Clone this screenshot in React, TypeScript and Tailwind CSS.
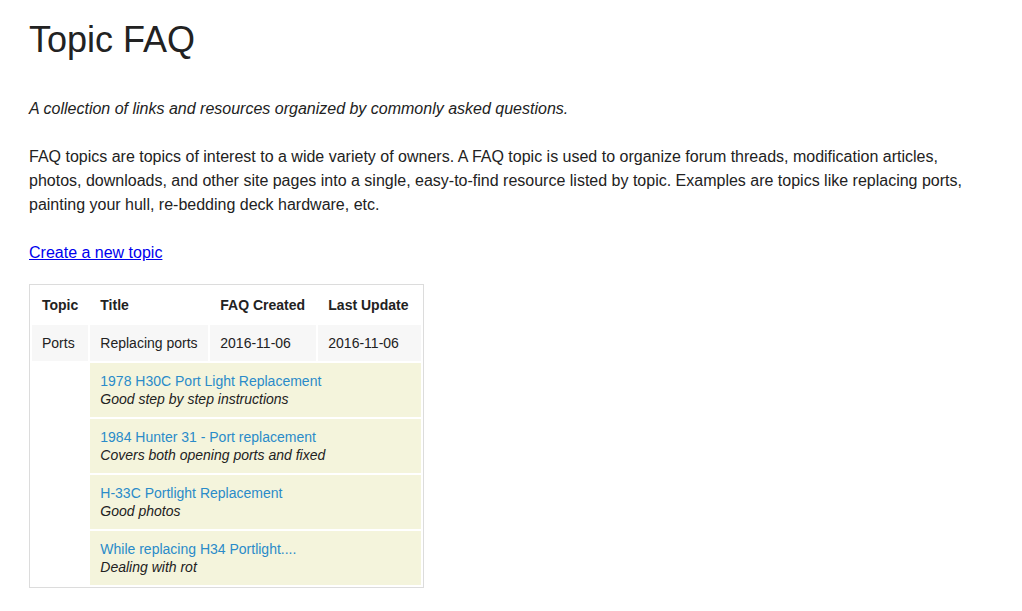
import React from 'react'

interface FaqLink {
  title: string
  note: string
}

interface Topic {
  name: string
  title: string
  created: string
  updated: string
  links: FaqLink[]
}

const topics: Topic[] = [
  {
    name: 'Ports',
    title: 'Replacing ports',
    created: '2016-11-06',
    updated: '2016-11-06',
    links: [
      { title: '1978 H30C Port Light Replacement', note: 'Good step by step instructions' },
      { title: '1984 Hunter 31 - Port replacement', note: 'Covers both opening ports and fixed' },
      { title: 'H-33C Portlight Replacement', note: 'Good photos' },
      { title: 'While replacing H34 Portlight....', note: 'Dealing with rot' },
    ],
  },
]

// column headers with their widths
const headers = [
  { label: 'Topic', width: 'w-[56px]' },
  { label: 'Title', width: 'w-[118px]' },
  { label: 'FAQ Created', width: 'w-[106px]' },
  { label: 'Last Update', width: 'w-[103px]' },
]

export default function App() {
  return (
    <div className="min-h-screen bg-white pl-[29px] pr-[29px] font-['Liberation_Sans',Arial,sans-serif] text-[#222]">
      <h1 className="pt-[20px] text-[36px] leading-[40px] font-normal">Topic FAQ</h1>

      <p className="mt-[37px] text-[16px] leading-[24px] italic">
        A collection of links and resources organized by commonly asked questions.
      </p>

      <p className="mt-[24px] text-[16px] leading-[24px]">
        FAQ topics are topics of interest to a wide variety of owners. A FAQ topic is used to organize
        forum threads, modification articles, photos, downloads, and other site pages into a single,
        easy-to-find resource listed by topic. Examples are topics like replacing ports, painting your
        hull, re-bedding deck hardware, etc.
      </p>

      <p className="mt-[24px] text-[16px] leading-[24px]">
        <a href="#" className="text-[#0000ee] underline">
          Create a new topic
        </a>
      </p>

      <table className="mt-[19px] border-separate border-spacing-[2px] border border-[#dcdcdc] text-[14px] leading-[20px]">
        <thead>
          <tr>
            {headers.map((h) => (
              <th key={h.label} className={`${h.width} px-[10px] py-[8px] text-left font-bold`}>
                {h.label}
              </th>
            ))}
          </tr>
        </thead>
        <tbody>
          {topics.map((topic) => (
            <React.Fragment key={topic.name}>
              <tr className="bg-[#f7f7f7]">
                <td className="px-[10px] py-[8px]">{topic.name}</td>
                <td className="px-[10px] py-[8px]">{topic.title}</td>
                <td className="px-[10px] py-[8px]">{topic.created}</td>
                <td className="px-[10px] py-[8px]">{topic.updated}</td>
              </tr>
              {topic.links.map((link) => (
                <tr key={link.title}>
                  <td />
                  <td colSpan={3} className="bg-[#f4f4dc] px-[10px] py-[9px] leading-[18px]">
                    <a href="#" className="block text-[#2a8bc9]">
                      {link.title}
                    </a>
                    <div className="italic">{link.note}</div>
                  </td>
                </tr>
              ))}
            </React.Fragment>
          ))}
        </tbody>
      </table>
    </div>
  )
}
